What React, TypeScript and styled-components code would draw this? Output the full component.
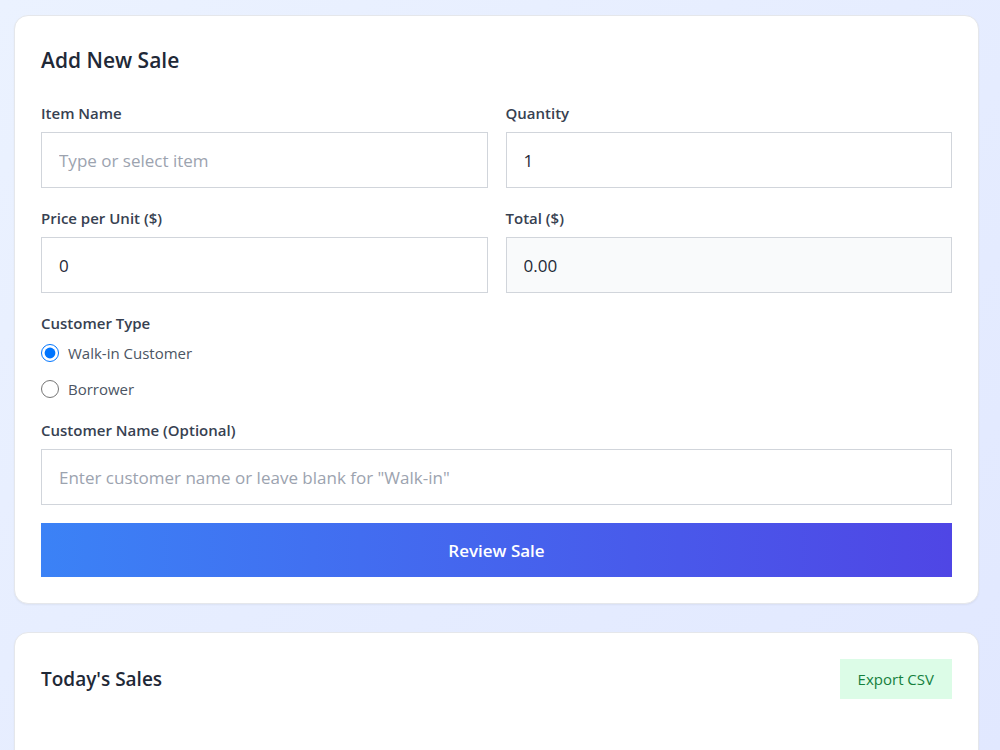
import { FC, useState } from "react";
import styled, { createGlobalStyle } from "styled-components";

const Colors = {
  gray50: "#f9fafb",
  gray200: "#e5e7eb",
  gray300: "#d1d5db",
  gray400: "#9ca3af",
  gray600: "#4b5563",
  gray700: "#374151",
  gray800: "#1f2937",
  green100: "#dcfce7",
  green700: "#15803d",
  blue: "#3b82f6",
  indigo: "#4f46e5",
  radio: "#0075ff",
};

const GlobalStyle = createGlobalStyle`
  * {
    box-sizing: border-box;
  }

  html {
    scrollbar-width: none;
  }

  body {
    margin: 0;
    font-family: "Open Sans", "Noto Sans", sans-serif;
    font-size: 16px;
    line-height: 24px;
    color: ${Colors.gray800};
  }

  button,
  input {
    font-family: inherit;
  }
`;

const Page = styled.main`
  min-height: 100vh;
  display: flex;
  flex-direction: column;
  gap: 28px;
  padding: 15px 21px 28px 14px;
  background: linear-gradient(to bottom right, #ebf2ff, #e0e7ff);
`;

const Card = styled.section`
  padding: 26px;
  background-color: white;
  border: 1px solid ${Colors.gray200};
  border-radius: 14px;
  box-shadow: 0 1px 2px rgba(0, 0, 0, 0.05);
`;

const SalesCard = styled(Card)`
  min-height: 260px;
`;

const Title = styled.h2`
  margin: 0 0 23px;
  font-size: 21px;
  line-height: 36px;
  font-weight: 600;
`;

const Form = styled.form`
  display: flex;
  flex-direction: column;
  gap: 18px;
`;

const FieldGrid = styled.div`
  display: grid;
  grid-template-columns: 1fr 1fr;
  gap: 18px;
`;

const Label = styled.label`
  display: block;
  margin-bottom: 7px;
  font-size: 15px;
  line-height: 24px;
  font-weight: 600;
  color: ${Colors.gray700};
`;

const Input = styled.input`
  display: block;
  width: 100%;
  height: 56px;
  padding: 0 17px;
  border: 1px solid ${Colors.gray300};
  border-radius: 0;
  background-color: white;
  color: ${Colors.gray800};
  font-size: 17px;
  outline: none;

  &:read-only {
    background-color: ${Colors.gray50};
  }

  &::placeholder {
    color: ${Colors.gray400};
    opacity: 1;
  }
`;

const Fieldset = styled.fieldset`
  margin: 0;
  padding: 0;
  border: 0;
`;

const Legend = styled(Label).attrs({ as: "legend" })`
  padding: 0;
`;

const Options = styled.div`
  display: flex;
  flex-direction: column;
  gap: 14px;
`;

const Option = styled.label`
  display: flex;
  align-items: center;
  gap: 9px;
  font-size: 15px;
  line-height: 22px;
  color: ${Colors.gray600};
`;

const Radio = styled.input`
  width: 18px;
  height: 18px;
  margin: 0;
  accent-color: ${Colors.radio};
`;

const ReviewButton = styled.button`
  height: 54px;
  border: 0;
  background: linear-gradient(to right, ${Colors.blue}, ${Colors.indigo});
  color: white;
  font-size: 17px;
  font-weight: 600;
  cursor: pointer;
`;

const CardHeader = styled.div`
  display: flex;
  align-items: center;
  justify-content: space-between;
`;

const Subtitle = styled.h3`
  margin: 0;
  font-size: 19px;
  line-height: 28px;
  font-weight: 600;
`;

const ExportButton = styled.button`
  height: 40px;
  padding: 0 18px;
  border: 0;
  background-color: ${Colors.green100};
  color: ${Colors.green700};
  font-size: 15px;
  cursor: pointer;
`;

const App: FC = () => {
  const [quantity, setQuantity] = useState("1");
  const [price, setPrice] = useState("0");
  const [customerType, setCustomerType] = useState("walk-in");
  const total = (Number(quantity) * Number(price)).toFixed(2);

  return (
    <>
      <GlobalStyle />
      <Page>
        <Card>
          <Title>Add New Sale</Title>
          <Form onSubmit={(e) => e.preventDefault()}>
            <FieldGrid>
              <div>
                <Label htmlFor="item">Item Name</Label>
                <Input id="item" type="text" placeholder="Type or select item" />
              </div>
              <div>
                <Label htmlFor="quantity">Quantity</Label>
                <Input
                  id="quantity"
                  type="number"
                  min="1"
                  value={quantity}
                  onChange={(e) => setQuantity(e.target.value)}
                />
              </div>
              <div>
                <Label htmlFor="price">Price per Unit ($)</Label>
                <Input
                  id="price"
                  type="number"
                  min="0"
                  value={price}
                  onChange={(e) => setPrice(e.target.value)}
                />
              </div>
              <div>
                <Label htmlFor="total">Total ($)</Label>
                <Input id="total" type="text" value={total} readOnly />
              </div>
            </FieldGrid>
            <Fieldset>
              <Legend>Customer Type</Legend>
              <Options>
                <Option>
                  <Radio
                    type="radio"
                    name="customerType"
                    checked={customerType === "walk-in"}
                    onChange={() => setCustomerType("walk-in")}
                  />
                  Walk-in Customer
                </Option>
                <Option>
                  <Radio
                    type="radio"
                    name="customerType"
                    checked={customerType === "borrower"}
                    onChange={() => setCustomerType("borrower")}
                  />
                  Borrower
                </Option>
              </Options>
            </Fieldset>
            <div>
              <Label htmlFor="customer">Customer Name (Optional)</Label>
              <Input
                id="customer"
                type="text"
                placeholder={'Enter customer name or leave blank for "Walk-in"'}
              />
            </div>
            <ReviewButton type="submit">Review Sale</ReviewButton>
          </Form>
        </Card>
        <SalesCard>
          <CardHeader>
            <Subtitle>Today's Sales</Subtitle>
            <ExportButton type="button">Export CSV</ExportButton>
          </CardHeader>
        </SalesCard>
      </Page>
    </>
  );
};

export default App;
